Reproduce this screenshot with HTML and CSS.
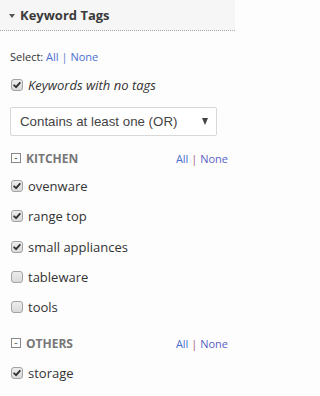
FILE: index.html
```html
<!DOCTYPE html>
<html>
<head>
<meta charset="utf-8">
<link rel="stylesheet" href="styles.css">
</head>
<body>
<div class="panel">
  <div class="panel-head">
    <span class="caret"></span>
    <span class="panel-title">Keyword Tags</span>
  </div>
  <div class="panel-body">
    <div class="select-line">Select: <a class="lnk">All</a> <span class="sep">|</span> <a class="lnk">None</a></div>
    <label class="check-row notags">
      <span class="cb checked"><svg viewBox="0 0 12 12"><path d="M2.6 6.4 L4.9 8.6 L9.4 3.4" /></svg></span>
      <span class="lbl italic">Keywords with no tags</span>
    </label>
    <div class="dropdown">
      <span class="dd-text">Contains at least one (OR)</span>
      <span class="dd-arrow"></span>
    </div>

    <div class="group">
      <div class="group-head">
        <span class="minus">-</span>
        <span class="group-name">KITCHEN</span>
        <span class="group-links"><a class="lnk">All</a> <span class="sep red">|</span> <a class="lnk none">None</a></span>
      </div>
      <label class="check-row item">
        <span class="cb checked"><svg viewBox="0 0 12 12"><path d="M2.6 6.4 L4.9 8.6 L9.4 3.4" /></svg></span>
        <span class="lbl">ovenware</span>
      </label>
      <label class="check-row item">
        <span class="cb checked"><svg viewBox="0 0 12 12"><path d="M2.6 6.4 L4.9 8.6 L9.4 3.4" /></svg></span>
        <span class="lbl">range top</span>
      </label>
      <label class="check-row item">
        <span class="cb checked"><svg viewBox="0 0 12 12"><path d="M2.6 6.4 L4.9 8.6 L9.4 3.4" /></svg></span>
        <span class="lbl">small appliances</span>
      </label>
      <label class="check-row item">
        <span class="cb"></span>
        <span class="lbl">tableware</span>
      </label>
      <label class="check-row item">
        <span class="cb"></span>
        <span class="lbl">tools</span>
      </label>
    </div>

    <div class="group others">
      <div class="group-head">
        <span class="minus">-</span>
        <span class="group-name">OTHERS</span>
        <span class="group-links"><a class="lnk">All</a> <span class="sep red">|</span> <a class="lnk none">None</a></span>
      </div>
      <label class="check-row item">
        <span class="cb checked"><svg viewBox="0 0 12 12"><path d="M2.6 6.4 L4.9 8.6 L9.4 3.4" /></svg></span>
        <span class="lbl">storage</span>
      </label>
    </div>
  </div>
</div>
</body>
</html>
```

FILE: styles.css
```css
html, body {
  margin: 0;
  padding: 0;
  background: #fdfdfd;
}
body {
  font-family: "Open Sans", "Liberation Sans", sans-serif;
  color: #333;
  width: 235px;
  height: 396px;
  overflow: hidden;
}
.panel-head {
  height: 30px;
  background: #f6f6f6;
  border-bottom: 1px dotted #a8a8a8;
  display: flex;
  align-items: center;
  padding-left: 9px;
  box-sizing: content-box;
}
.caret {
  width: 0;
  height: 0;
  border-left: 3.5px solid transparent;
  border-right: 3.5px solid transparent;
  border-top: 4px solid #555;
  margin-right: 5px;
  margin-top: 1px;
}
.panel-title {
  font-weight: 700;
  font-size: 13px;
  color: #3a3a3a;
  line-height: 30px;
}
.panel-body {
  padding: 18px 18px 0 10px;
}
.select-line {
  font-size: 11px;
  line-height: 16px;
  color: #333;
}
.lnk {
  color: #4a6fcf;
  text-decoration: none;
}
.sep {
  color: #5a7fd0;
}
.sep.red {
  color: #a85a7a;
}
.lnk.none {
  color: #5a5fc4;
}
.check-row {
  display: flex;
  align-items: center;
}
.notags {
  margin-top: 11px;
  height: 18px;
}
.cb {
  width: 12px;
  height: 12px;
  box-sizing: border-box;
  border: 1px solid #a3a3a3;
  border-radius: 3px;
  background: linear-gradient(#ececec, #dadada);
  margin-left: 1px;
  margin-right: 5px;
  flex: none;
  display: flex;
}
.cb svg {
  width: 10px;
  height: 10px;
}
.cb path {
  fill: none;
  stroke: #303030;
  stroke-width: 2.2;
  stroke-linecap: round;
  stroke-linejoin: round;
}
.lbl {
  font-size: 13px;
  color: #333;
}
.italic {
  font-style: italic;
}
.dropdown {
  margin-top: 13px;
  height: 29px;
  width: 207px;
  box-sizing: border-box;
  border: 1px solid #d8d8d8;
  border-radius: 2px;
  background: #fff;
  display: flex;
  align-items: center;
  justify-content: space-between;
  padding: 0 8px 0 9px;
}
.dd-text {
  font-family: "Liberation Sans", Arial, sans-serif;
  font-size: 13.3px;
  color: #444;
}
.dd-arrow {
  width: 0;
  height: 0;
  border-left: 3.5px solid transparent;
  border-right: 3.5px solid transparent;
  border-top: 7px solid #444;
}
.group {
  margin-top: 13px;
}
.group.others {
  margin-top: 12px;
}
.group-head {
  display: flex;
  align-items: center;
  height: 18px;
  margin-bottom: 4px;
}
.others .group-head {
  margin-bottom: 5px;
}
.minus {
  width: 10px;
  height: 10px;
  box-sizing: border-box;
  border: 1px solid #888;
  margin-left: 1px;
  margin-right: 5px;
  font-size: 10px;
  line-height: 7px;
  text-align: center;
  color: #555;
  font-family: "Liberation Sans", sans-serif;
}
.group-name {
  font-weight: 700;
  font-size: 12px;
  color: #777;
  flex: 1;
}
.group-links {
  font-size: 11px;
  margin-right: -11px;
}
.item {
  height: 30.3px;
}
```
